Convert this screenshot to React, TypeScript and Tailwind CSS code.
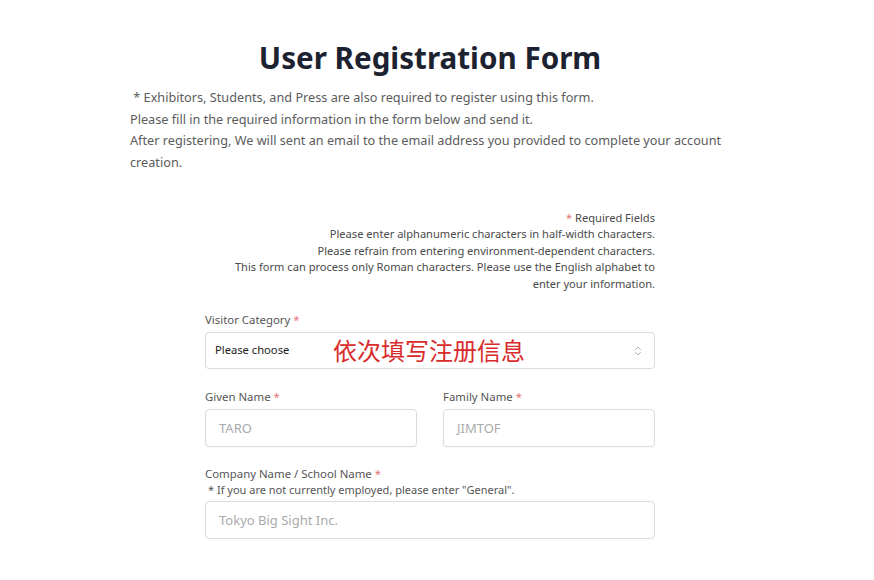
import { ChevronsUpDown } from 'lucide-react';

const font = { fontFamily: '"Noto Sans", "Open Sans", sans-serif' };

const Req = () => <span className="text-[#e57373]"> *</span>;

const Field = ({ label, placeholder }: { label: string; placeholder: string }) => (
    <div className="flex flex-1 flex-col">
        <label className="text-[11.4px] leading-[18px] text-[#555]">
            {label}
            <Req />
        </label>
        <div className="mt-[3px] flex h-[38px] items-center rounded-[4px] border border-[#dcdcdc] bg-white px-[13px] text-[13px] text-[#aaa] shadow-[0_1px_2px_rgba(0,0,0,0.04)]">
            {placeholder}
        </div>
    </div>
);

export default function App() {
    return (
        <div className="min-h-[580px] w-full bg-white" style={font}>
            <div className="ml-[130px] w-[600px] pt-[38px]">
                <h1 className="text-center text-[29.6px] leading-[40px] font-bold text-[#1c2230]">User Registration Form</h1>
                <div className="mt-[9px] text-[12.7px] leading-[21.7px] text-[#5c5c5c]">
                    <p>&nbsp;* Exhibitors, Students, and Press are also required to register using this form.</p>
                    <p>Please fill in the required information in the form below and send it.</p>
                    <p>After registering, We will sent an email to the email address you provided to complete your account creation.</p>
                </div>
            </div>

            <div className="ml-[205px] w-[450px] pt-[36px]">
                <div className="text-right text-[11.1px] leading-[16.5px] text-[#4a4a4a]">
                    <p>
                        <span className="text-[#e57373]">* </span>Required Fields
                    </p>
                    <p>Please enter alphanumeric characters in half-width characters.</p>
                    <p>Please refrain from entering environment-dependent characters.</p>
                    <p>This form can process only Roman characters. Please use the English alphabet to enter your information.</p>
                </div>

                <div className="mt-[19px] flex flex-col">
                    <label className="text-[11.4px] leading-[18px] text-[#555]">
                        Visitor Category
                        <Req />
                    </label>
                    <div className="relative mt-[3px] flex h-[37px] items-center justify-between rounded-[4px] border border-[#dcdcdc] bg-white pr-[10px] pl-[9px] text-[11.2px] text-[#222]">
                        <span>Please choose</span>
                        <ChevronsUpDown className="size-[12px] text-[#999]" strokeWidth={1.5} />
                        <span
                            className="absolute top-[2px] left-[127px] text-[24px] leading-[30px] text-[#d92b2b]"
                            style={{ fontFamily: '"Noto Sans CJK SC", sans-serif' }}
                        >
                            依次填写注册信息
                        </span>
                    </div>
                </div>

                <div className="mt-[19px] flex gap-[26px]">
                    <Field label="Given Name" placeholder="TARO" />
                    <Field label="Family Name" placeholder="JIMTOF" />
                </div>

                <div className="mt-[18px] flex flex-col">
                    <label className="text-[11.4px] leading-[18px] text-[#555]">
                        Company Name / School Name
                        <Req />
                    </label>
                    <p className="pl-[3px] text-[11px] leading-[14px] text-[#555]">* If you are not currently employed, please enter "General".</p>
                    <div className="mt-[4px] flex h-[38px] items-center rounded-[4px] border border-[#dcdcdc] bg-white px-[13px] text-[13px] text-[#aaa]">
                        Tokyo Big Sight Inc.
                    </div>
                </div>
            </div>
        </div>
    );
}
